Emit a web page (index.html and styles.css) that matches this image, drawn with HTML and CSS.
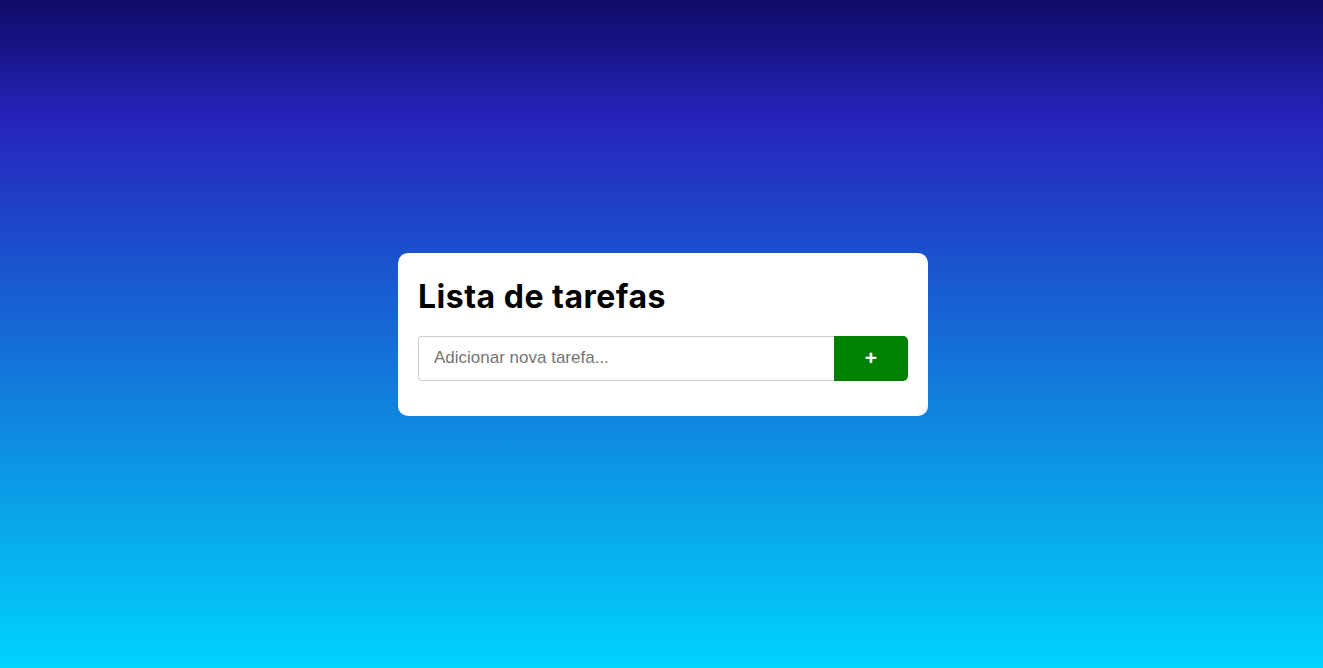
FILE: index.html
```html
<!DOCTYPE html>
<html lang="pt-BR">
<head>
<meta charset="utf-8">
<title>Lista de tarefas</title>
<link rel="stylesheet" href="styles.css">
</head>
<body>
<main class="page">
  <section class="card">
    <h2 class="title">Lista de tarefas</h2>
    <form class="row" onsubmit="return false">
      <input class="task-input" type="text" placeholder="Adicionar nova tarefa...">
      <button class="add-btn" type="submit">+</button>
    </form>
  </section>
</main>
</body>
</html>
```
FILE: styles.css
```css
* { box-sizing: border-box; }
html, body { margin: 0; padding: 0; height: 100%; }
body {
  background: linear-gradient(180deg, #0f0b66 0%, #2624bb 18%, #1a55cf 40%, #0c96e4 70%, #00d4fd 100%);
  font-family: "Liberation Sans", Arial, sans-serif;
}
.page {
  min-height: 100vh;
  display: flex;
  align-items: center;
  justify-content: center;
  padding-left: 3px;
}
.card {
  width: 530px;
  background: #fff;
  border-radius: 10px;
  padding: 20px 20px 35px;
}
.title {
  margin: 0 0 15px;
  font-family: "Inter", "Noto Sans", sans-serif;
  font-weight: 700;
  font-size: 32px;
  line-height: 48px;
  letter-spacing: 0.5px;
  color: #000;
}
.row {
  display: flex;
  margin: 0;
}
.task-input {
  flex: 1;
  height: 45px;
  border: 1px solid #ccc;
  border-right: none;
  border-radius: 4px 0 0 4px;
  padding: 0 15px;
  font-family: "Liberation Sans", Arial, sans-serif;
  font-size: 17px;
  color: #333;
  outline: none;
}
.task-input::placeholder { color: #757575; }
.add-btn {
  width: 74px;
  height: 45px;
  border: none;
  border-radius: 0 5px 5px 0;
  background: #008000;
  color: #fff;
  font-family: "Liberation Sans", Arial, sans-serif;
  font-size: 21px;
  font-weight: 700;
  cursor: pointer;
  padding: 0;
}
```
